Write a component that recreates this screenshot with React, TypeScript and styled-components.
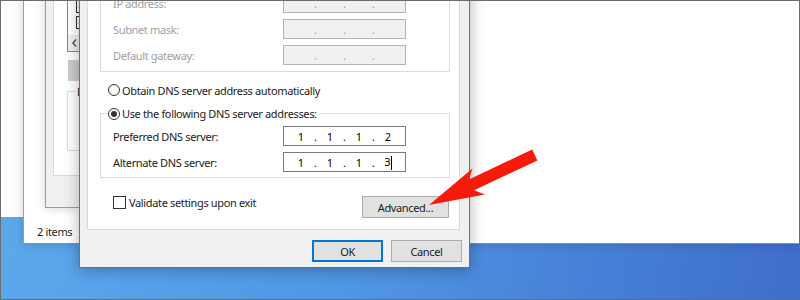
import styled, { createGlobalStyle } from 'styled-components';

const GlobalStyle = createGlobalStyle`
  html, body {
    margin: 0;
    padding: 0;
    background: #fff;
  }
  * {
    box-sizing: border-box;
  }
`;

const Desktop = styled.div`
  position: relative;
  width: 800px;
  height: 300px;
  overflow: hidden;
  background: linear-gradient(100deg, #5eaaee 0%, #4f94e2 50%, #3e6dcb 100%);
  font-family: "Noto Sans", "DejaVu Sans", sans-serif;
  font-size: 11px;
  letter-spacing: -0.35px;
  line-height: 15px;
  color: #1b1b1b;

  &::after {
    border: 1px solid #6c6c6c;
    content: "";
    inset: 0;
    pointer-events: none;
    position: absolute;
    z-index: 20;
  }
`;

/* windows on the desktop */

const BackWindow = styled.div`
  background: #fff;
  height: 237px;
  left: 0;
  position: absolute;
  top: -20px;
  width: 23px;
`;

const ExplorerWindow = styled.div`
  background: #fff;
  border-bottom: 1px solid #8f8f8f;
  border-left: 1px solid #9c9c9c;
  box-shadow: 0 0 10px rgba(0, 0, 0, 0.18);
  display: flex;
  flex-direction: column;
  height: 264px;
  justify-content: flex-end;
  left: 23px;
  position: absolute;
  right: 0;
  top: -20px;
`;

const StatusBar = styled.div`
  height: 22px;
  line-height: 22px;
  padding-left: 13px;
  color: #1e1e1e;
`;

// only the strip left of the IPv4 dialog is ever visible
const AdapterDialog = styled.div`
  background: #f0f0f0;
  border: 1px solid #9a9a9a;
  border-right: none;
  box-shadow: 0 0 10px rgba(0, 0, 0, 0.18);
  display: flex;
  flex-direction: column;
  height: 228px;
  left: 45px;
  overflow: hidden;
  padding: 0 0 34px 7px;
  position: absolute;
  top: -20px;
  width: 35px;
`;

const AdapterPage = styled.div`
  background: #fff;
  border: 1px solid #d9d9d9;
  border-right: none;
  display: flex;
  flex: 1;
  flex-direction: column;
  justify-content: flex-end;
  padding: 0 0 24px 13px;
`;

const ItemList = styled.div`
  border: 1px solid #828790;
  border-right: none;
  display: flex;
  flex-direction: column;
  height: 70px;
  justify-content: flex-end;
`;

const ItemRows = styled.div`
  padding: 0 0 5px 8px;
`;

const ItemRow = styled.div`
  align-items: center;
  display: flex;
  height: 16px;
`;

const HScroll = styled.div`
  background: #f0f0f0;
  display: flex;
  height: 16px;
`;

const ScrollArrow = styled.span`
  align-items: center;
  display: flex;
  justify-content: center;
  width: 16px;
`;

const FlatButton = styled.div`
  background: #cccccc;
  height: 21px;
  margin: 8px 0 0 1px;
`;

const SmallGroup = styled.fieldset`
  border: 1px solid #dcdcdc;
  border-right: none;
  height: 67px;
  margin: 3px 0 0 0;
  min-width: 0;
  padding: 0;

  legend {
    line-height: 15px;
    margin-left: 7px;
    max-width: 12px;
    overflow: hidden;
    padding: 0 2px;
    white-space: nowrap;
  }
`;

const IpDialog = styled.div`
  background: #f0f0f0;
  border: 1px solid #707070;
  bottom: 32px;
  box-shadow: 0 2px 14px rgba(0, 0, 0, 0.3);
  display: flex;
  flex-direction: column;
  left: 79px;
  padding: 0 9px 0 7px;
  position: absolute;
  top: -150px;
  width: 391px;
`;

const TabPage = styled.div`
  background: #fff;
  border: 1px solid #d9d9d9;
  display: flex;
  flex: 1;
  flex-direction: column;
  justify-content: flex-end;
  padding-bottom: 11px;
`;

const GroupBox = styled.fieldset<{ $padBottom: number }>`
  border: 1px solid #dcdcdc;
  margin: 0 9px 0 12px;
  min-width: 0;
  padding: 5px 0 ${p => p.$padBottom}px 0;
`;

const Legend = styled.legend`
  height: 15px;
  margin-left: 6px;
  padding: 0 3px 0 1px;
`;

const Choice = styled.label<{ $disabled?: boolean }>`
  align-items: center;
  color: ${p => (p.$disabled ? '#a0a0a0' : '#1b1b1b')};
  display: flex;
  gap: 2px;
  height: 15px;
  white-space: nowrap;
`;

const RadioLine = styled(Choice)`
  height: 16px;
  margin: 10px 0 8px 20px;
`;

const Radio = styled.span<{ $checked?: boolean }>`
  background: #fff;
  border: 1px solid #333;
  border-radius: 50%;
  display: inline-block;
  flex: none;
  height: 12px;
  position: relative;
  width: 12px;

  &::after {
    background: #333;
    border-radius: 50%;
    content: "";
    display: ${p => (p.$checked ? 'block' : 'none')};
    inset: 2px;
    position: absolute;
  }
`;

const Box = styled.span`
  align-items: center;
  background: #fff;
  border: 1px solid #333;
  display: inline-flex;
  flex: none;
  height: 13px;
  justify-content: center;
  width: 13px;
`;

const FieldGrid = styled.div`
  align-items: center;
  display: grid;
  grid-template-columns: 170px 123px;
  padding-left: 12px;
  row-gap: 6px;
`;

const FieldLabel = styled.span<{ $disabled?: boolean }>`
  color: ${p => (p.$disabled ? '#a0a0a0' : '#1b1b1b')};
  white-space: nowrap;
`;

const IpBox = styled.div<{ $disabled?: boolean }>`
  align-items: center;
  background: ${p => (p.$disabled ? '#f0f0f0' : '#fff')};
  border: 1px solid ${p => (p.$disabled ? '#b4b4b4' : '#7a7a7a')};
  color: ${p => (p.$disabled ? '#9c9c9c' : '#000')};
  display: flex;
  height: 20px;
  justify-content: center;
  letter-spacing: 0;
  width: 123px;
`;

const Octet = styled.span`
  text-align: center;
  width: 24px;
`;

const Dot = styled.span`
  text-align: center;
  width: 5px;
`;

const Caret = styled.span`
  background: #000;
  display: inline-block;
  height: 14px;
  vertical-align: middle;
  width: 1px;
`;

const BottomRow = styled.div`
  align-items: flex-start;
  display: flex;
  justify-content: space-between;
  margin-top: 18px;
  padding: 0 10px 0 25px;
`;

const CheckLine = styled.label`
  align-items: center;
  display: flex;
  gap: 3px;
  height: 13px;
  white-space: nowrap;
`;

const PushButton = styled.button<{ $width: number; $default?: boolean }>`
  background: #e1e1e1;
  border: 1px solid ${p => (p.$default ? '#0078d7' : '#adadad')};
  box-shadow: ${p => (p.$default ? 'inset 0 0 0 1px #0078d7' : 'none')};
  color: #1b1b1b;
  font: inherit;
  height: 22px;
  letter-spacing: inherit;
  padding: 0;
  width: ${p => p.$width}px;
`;

const Footer = styled.div`
  display: flex;
  gap: 8px;
  height: 37px;
  justify-content: flex-end;
  margin-right: -2px;
  padding-top: 10px;
`;

const Arrow = styled.svg`
  height: 300px;
  inset: 0;
  pointer-events: none;
  position: absolute;
  width: 800px;
  z-index: 15;
`;

function CheckBox({ checked }: { checked?: boolean }) {
  return (
    <Box>
      {checked && (
        <svg width="9" height="9" viewBox="0 0 9 9">
          <path d="M1 4.5 L3.5 7 L8 1.5" fill="none" stroke="#222" strokeWidth="1.6" />
        </svg>
      )}
    </Box>
  );
}

function IpAddress({ octets, disabled, caret }: { octets: string[]; disabled?: boolean; caret?: boolean }) {
  return (
    <IpBox $disabled={disabled}>
      {octets.map((o, i) => (
        <span key={i} style={{ display: 'contents' }}>
          {i > 0 && <Dot>.</Dot>}
          <Octet>
            {o}
            {caret && i === 3 && <Caret />}
          </Octet>
        </span>
      ))}
    </IpBox>
  );
}

const empty = ['', '', '', ''];

export default function App() {
  return (
    <>
      <GlobalStyle />
      <Desktop>
        <BackWindow />
        <ExplorerWindow>
          <StatusBar>2 items</StatusBar>
        </ExplorerWindow>

        <AdapterDialog>
          <AdapterPage>
            <ItemList>
              <ItemRows>
                <ItemRow>
                  <CheckBox checked />
                </ItemRow>
                <ItemRow>
                  <CheckBox checked />
                </ItemRow>
              </ItemRows>
              <HScroll>
                <ScrollArrow>
                  <svg width="5" height="8" viewBox="0 0 5 8">
                    <path d="M4 0.5 L1 4 L4 7.5" fill="none" stroke="#505050" strokeWidth="1.4" />
                  </svg>
                </ScrollArrow>
              </HScroll>
            </ItemList>
            <FlatButton />
            <SmallGroup>
              <legend>Description</legend>
            </SmallGroup>
          </AdapterPage>
        </AdapterDialog>

        <IpDialog>
          <TabPage>
            <GroupBox $padBottom={6}>
              <Legend>
                <Choice>
                  <Radio />
                  Use the following IP address:
                </Choice>
              </Legend>
              <FieldGrid>
                <FieldLabel $disabled>IP address:</FieldLabel>
                <IpAddress octets={empty} disabled />
                <FieldLabel $disabled>Subnet mask:</FieldLabel>
                <IpAddress octets={empty} disabled />
                <FieldLabel $disabled>Default gateway:</FieldLabel>
                <IpAddress octets={empty} disabled />
              </FieldGrid>
            </GroupBox>

            <RadioLine>
              <Radio />
              Obtain DNS server address automatically
            </RadioLine>

            <GroupBox $padBottom={5}>
              <Legend>
                <Choice>
                  <Radio $checked />
                  Use the following DNS server addresses:
                </Choice>
              </Legend>
              <FieldGrid>
                <FieldLabel>Preferred DNS server:</FieldLabel>
                <IpAddress octets={['1', '1', '1', '2']} />
                <FieldLabel>Alternate DNS server:</FieldLabel>
                <IpAddress octets={['1', '1', '1', '3']} caret />
              </FieldGrid>
            </GroupBox>

            <BottomRow>
              <CheckLine>
                <CheckBox />
                Validate settings upon exit
              </CheckLine>
              <PushButton $width={87}>Advanced...</PushButton>
            </BottomRow>
          </TabPage>
          <Footer>
            <PushButton $width={71} $default>OK</PushButton>
            <PushButton $width={71}>Cancel</PushButton>
          </Footer>
        </IpDialog>

        <Arrow viewBox="0 0 800 300">
          <polygon
            points="429,205 472.5,168.4 468.9,179.5 532.2,149.6 537.4,160.4 474.1,190.3 484.9,194.6"
            fill="#f61a0a"
          />
        </Arrow>
      </Desktop>
    </>
  );
}
